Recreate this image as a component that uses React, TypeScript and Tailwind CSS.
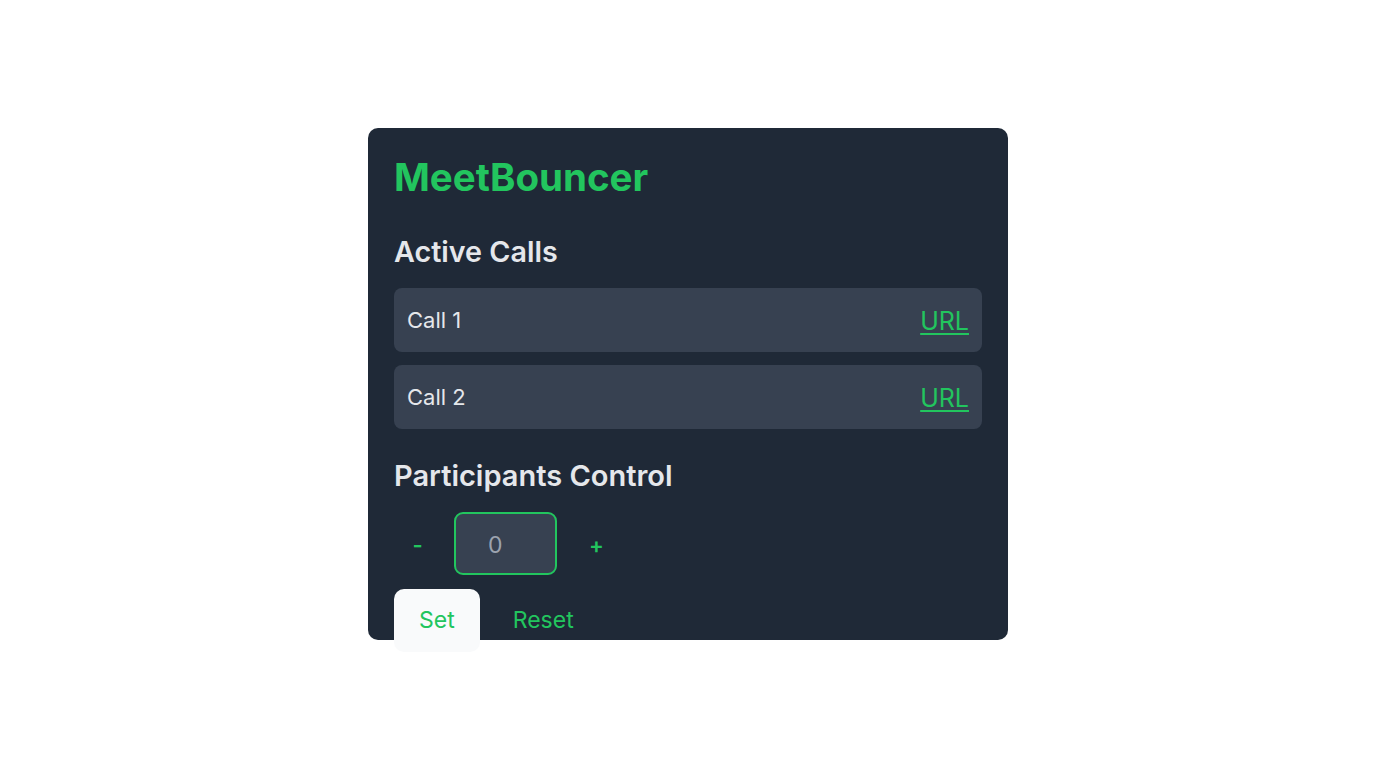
import React from "react";

export default function App() {
  const calls = ["Call 1", "Call 2"];
  return (
    <div
      className="w-full h-screen bg-white flex items-center justify-center"
      style={{ fontFamily: "Inter, 'Noto Sans', sans-serif" }}
    >
      <div className="w-[640px] h-[512px] bg-[#1f2937] rounded-[10px] p-[26px] flex flex-col">
        <h1 className="text-[38.5px] leading-[46px] font-bold text-[#22c55e]">MeetBouncer</h1>

        <h2 className="mt-[35px] mb-[19px] text-[28.7px] leading-[34px] font-semibold text-[#e5e7eb]">
          Active Calls
        </h2>
        <div className="flex flex-col gap-[13px]">
          {calls.map((c) => (
            <div
              key={c}
              className="h-[64px] bg-[#374151] rounded-[8px] px-[13px] flex items-center justify-between"
            >
              <span className="text-[22px] text-[#e5e7eb]">{c}</span>
              <a href="#" className="mt-[4px] text-[25px] text-[#22c55e] underline underline-offset-[3px]">
                URL
              </a>
            </div>
          ))}
        </div>

        <h2 className="mt-[30px] mb-[19px] text-[29px] leading-[34px] font-semibold text-[#e5e7eb]">
          Participants Control
        </h2>
        <div className="flex items-center">
          <button className="w-[47px] h-[63px] pt-[3px] text-[22px] font-semibold text-[#22c55e] flex items-center justify-center">
            -
          </button>
          <div className="ml-[13px] w-[103px] h-[63px] rounded-[9px] border-2 border-[#22c55e] bg-[#374151] pl-[32px] pt-[3px] flex items-center">
            <span className="text-[23px] text-[#9ca3af]">0</span>
          </div>
          <button className="ml-[16px] w-[47px] h-[63px] pt-[3px] text-[22px] font-semibold text-[#22c55e] flex items-center justify-center">
            +
          </button>
        </div>
        <div className="mt-[14px] flex items-center gap-[8px]">
          <button className="h-[63px] px-[25px] rounded-[10px] bg-[#f9fafb] text-[23px] text-[#22c55e]">
            Set
          </button>
          <button className="h-[63px] px-[25px] rounded-[10px] text-[23px] text-[#22c55e]">
            Reset
          </button>
        </div>
      </div>
    </div>
  );
}
